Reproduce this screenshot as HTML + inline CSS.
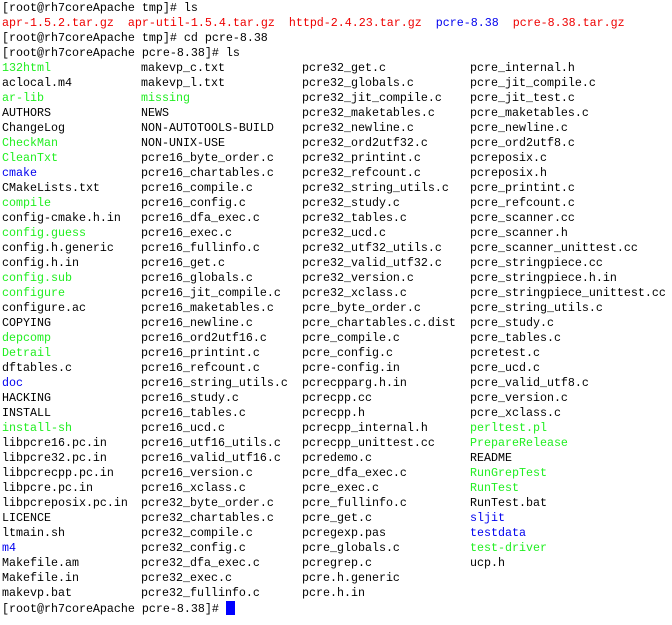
<!DOCTYPE html>
<html><head><meta charset="utf-8"><style>
html,body{margin:0;padding:0;background:#fff;width:672px;height:625px;overflow:hidden}
#t{position:absolute;left:2px;top:1px;font-family:"Liberation Mono",monospace;font-size:11.667px;line-height:15px;color:#000}
.r{height:15px;white-space:pre}
.r span{display:inline-block}
.a{width:139px}.b{width:161px}.c{width:168px}
.g{color:#22ee22}.u{color:#0000ee}.d{color:#ee0000}
.cur{display:inline-block;width:9px;height:14px;background:#0000ff;vertical-align:-3px}
</style></head><body><div id="t">
<div class="r">[root@rh7coreApache tmp]# ls</div>
<div class="r"><span class="d">apr-1.5.2.tar.gz</span>  <span class="d">apr-util-1.5.4.tar.gz</span>  <span class="d">httpd-2.4.23.tar.gz</span>  <span class="u">pcre-8.38</span>  <span class="d">pcre-8.38.tar.gz</span></div>
<div class="r">[root@rh7coreApache tmp]# cd pcre-8.38</div>
<div class="r">[root@rh7coreApache pcre-8.38]# ls</div>
<div class="r"><span class="a g">132html</span><span class="b">makevp_c.txt</span><span class="c">pcre32_get.c</span><span>pcre_internal.h</span></div>
<div class="r"><span class="a">aclocal.m4</span><span class="b">makevp_l.txt</span><span class="c">pcre32_globals.c</span><span>pcre_jit_compile.c</span></div>
<div class="r"><span class="a g">ar-lib</span><span class="b g">missing</span><span class="c">pcre32_jit_compile.c</span><span>pcre_jit_test.c</span></div>
<div class="r"><span class="a">AUTHORS</span><span class="b">NEWS</span><span class="c">pcre32_maketables.c</span><span>pcre_maketables.c</span></div>
<div class="r"><span class="a">ChangeLog</span><span class="b">NON-AUTOTOOLS-BUILD</span><span class="c">pcre32_newline.c</span><span>pcre_newline.c</span></div>
<div class="r"><span class="a g">CheckMan</span><span class="b">NON-UNIX-USE</span><span class="c">pcre32_ord2utf32.c</span><span>pcre_ord2utf8.c</span></div>
<div class="r"><span class="a g">CleanTxt</span><span class="b">pcre16_byte_order.c</span><span class="c">pcre32_printint.c</span><span>pcreposix.c</span></div>
<div class="r"><span class="a u">cmake</span><span class="b">pcre16_chartables.c</span><span class="c">pcre32_refcount.c</span><span>pcreposix.h</span></div>
<div class="r"><span class="a">CMakeLists.txt</span><span class="b">pcre16_compile.c</span><span class="c">pcre32_string_utils.c</span><span>pcre_printint.c</span></div>
<div class="r"><span class="a g">compile</span><span class="b">pcre16_config.c</span><span class="c">pcre32_study.c</span><span>pcre_refcount.c</span></div>
<div class="r"><span class="a">config-cmake.h.in</span><span class="b">pcre16_dfa_exec.c</span><span class="c">pcre32_tables.c</span><span>pcre_scanner.cc</span></div>
<div class="r"><span class="a g">config.guess</span><span class="b">pcre16_exec.c</span><span class="c">pcre32_ucd.c</span><span>pcre_scanner.h</span></div>
<div class="r"><span class="a">config.h.generic</span><span class="b">pcre16_fullinfo.c</span><span class="c">pcre32_utf32_utils.c</span><span>pcre_scanner_unittest.cc</span></div>
<div class="r"><span class="a">config.h.in</span><span class="b">pcre16_get.c</span><span class="c">pcre32_valid_utf32.c</span><span>pcre_stringpiece.cc</span></div>
<div class="r"><span class="a g">config.sub</span><span class="b">pcre16_globals.c</span><span class="c">pcre32_version.c</span><span>pcre_stringpiece.h.in</span></div>
<div class="r"><span class="a g">configure</span><span class="b">pcre16_jit_compile.c</span><span class="c">pcre32_xclass.c</span><span>pcre_stringpiece_unittest.cc</span></div>
<div class="r"><span class="a">configure.ac</span><span class="b">pcre16_maketables.c</span><span class="c">pcre_byte_order.c</span><span>pcre_string_utils.c</span></div>
<div class="r"><span class="a">COPYING</span><span class="b">pcre16_newline.c</span><span class="c">pcre_chartables.c.dist</span><span>pcre_study.c</span></div>
<div class="r"><span class="a g">depcomp</span><span class="b">pcre16_ord2utf16.c</span><span class="c">pcre_compile.c</span><span>pcre_tables.c</span></div>
<div class="r"><span class="a g">Detrail</span><span class="b">pcre16_printint.c</span><span class="c">pcre_config.c</span><span>pcretest.c</span></div>
<div class="r"><span class="a">dftables.c</span><span class="b">pcre16_refcount.c</span><span class="c">pcre-config.in</span><span>pcre_ucd.c</span></div>
<div class="r"><span class="a u">doc</span><span class="b">pcre16_string_utils.c</span><span class="c">pcrecpparg.h.in</span><span>pcre_valid_utf8.c</span></div>
<div class="r"><span class="a">HACKING</span><span class="b">pcre16_study.c</span><span class="c">pcrecpp.cc</span><span>pcre_version.c</span></div>
<div class="r"><span class="a">INSTALL</span><span class="b">pcre16_tables.c</span><span class="c">pcrecpp.h</span><span>pcre_xclass.c</span></div>
<div class="r"><span class="a g">install-sh</span><span class="b">pcre16_ucd.c</span><span class="c">pcrecpp_internal.h</span><span class="g">perltest.pl</span></div>
<div class="r"><span class="a">libpcre16.pc.in</span><span class="b">pcre16_utf16_utils.c</span><span class="c">pcrecpp_unittest.cc</span><span class="g">PrepareRelease</span></div>
<div class="r"><span class="a">libpcre32.pc.in</span><span class="b">pcre16_valid_utf16.c</span><span class="c">pcredemo.c</span><span>README</span></div>
<div class="r"><span class="a">libpcrecpp.pc.in</span><span class="b">pcre16_version.c</span><span class="c">pcre_dfa_exec.c</span><span class="g">RunGrepTest</span></div>
<div class="r"><span class="a">libpcre.pc.in</span><span class="b">pcre16_xclass.c</span><span class="c">pcre_exec.c</span><span class="g">RunTest</span></div>
<div class="r"><span class="a">libpcreposix.pc.in</span><span class="b">pcre32_byte_order.c</span><span class="c">pcre_fullinfo.c</span><span>RunTest.bat</span></div>
<div class="r"><span class="a">LICENCE</span><span class="b">pcre32_chartables.c</span><span class="c">pcre_get.c</span><span class="u">sljit</span></div>
<div class="r"><span class="a">ltmain.sh</span><span class="b">pcre32_compile.c</span><span class="c">pcregexp.pas</span><span class="u">testdata</span></div>
<div class="r"><span class="a u">m4</span><span class="b">pcre32_config.c</span><span class="c">pcre_globals.c</span><span class="g">test-driver</span></div>
<div class="r"><span class="a">Makefile.am</span><span class="b">pcre32_dfa_exec.c</span><span class="c">pcregrep.c</span><span>ucp.h</span></div>
<div class="r"><span class="a">Makefile.in</span><span class="b">pcre32_exec.c</span><span class="c">pcre.h.generic</span></div>
<div class="r"><span class="a">makevp.bat</span><span class="b">pcre32_fullinfo.c</span><span class="c">pcre.h.in</span></div>
<div class="r">[root@rh7coreApache pcre-8.38]# <span class="cur"></span></div>
</div></body></html>
